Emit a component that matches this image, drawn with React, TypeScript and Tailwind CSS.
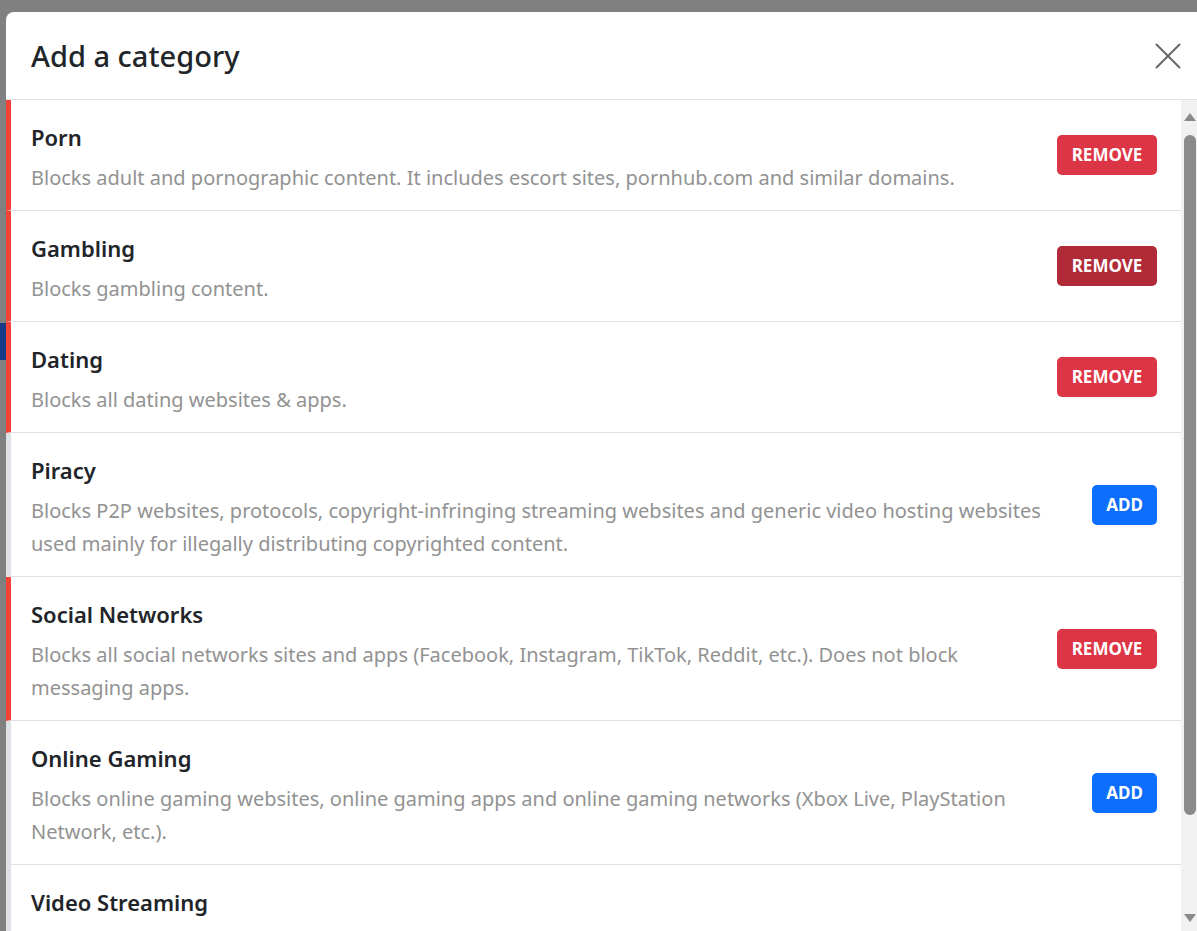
import { X } from 'lucide-react';

const categories = [
  { name: 'Porn', desc: 'Blocks adult and pornographic content. It includes escort sites, pornhub.com and similar domains.', active: true },
  { name: 'Gambling', desc: 'Blocks gambling content.', active: true, hover: true },
  { name: 'Dating', desc: 'Blocks all dating websites & apps.', active: true },
  { name: 'Piracy', desc: 'Blocks P2P websites, protocols, copyright-infringing streaming websites and generic video hosting websites used mainly for illegally distributing copyrighted content.', active: false },
  { name: 'Social Networks', desc: 'Blocks all social networks sites and apps (Facebook, Instagram, TikTok, Reddit, etc.). Does not block messaging apps.', active: true },
  { name: 'Online Gaming', desc: 'Blocks online gaming websites, online gaming apps and online gaming networks (Xbox Live, PlayStation Network, etc.).', active: false },
  { name: 'Video Streaming', desc: 'Blocks video streaming websites and apps (YouTube, Netflix, Twitch, Vimeo, Dailymotion, Disney+, Hulu, Prime Video, HBO Max, etc.). It also blocks embedded video players on other websites, and video content inside social apps.', active: false },
];

export default function App() {
  return (
    <div className="h-[931px] w-[1197px] overflow-hidden bg-[#808080] flex font-['Noto_Sans',sans-serif]">
      {/* page behind the overlay */}
      <div className="w-[6px] flex flex-col">
        <div className="h-[323px]"></div>
        <div className="h-[37px] bg-[#163a86]"></div>
      </div>

      <div className="flex-1 mt-[12px] bg-white rounded-tl-[8px] flex flex-col">
        <div className="h-[88px] shrink-0 border-b border-[#dee2e6] flex items-center justify-between pl-[25px] pr-[6px]">
          <h1 className="text-[29px] font-medium text-[#212529]">Add a category</h1>
          <button className="w-[46px] h-[46px] flex items-center justify-center text-[#6b6b6b]">
            <X size={46} strokeWidth={1.1} />
          </button>
        </div>

        <div className="flex flex-1 min-h-0">
          <div className="flex-1 overflow-hidden">
            {categories.map((c) => (
              <div
                key={c.name}
                className={`flex items-center border-l-[5px] border-b border-b-[#dee2e6] pl-[20px] pr-[24px] ${c.active ? 'border-l-[#f44336]' : 'border-l-[#dee2e6]'}`}
              >
                <div className="flex-1 pr-[30px] pt-[21px] pb-[16px]">
                  <div className="text-[22px] leading-[32px] font-semibold text-[#212529]">{c.name}</div>
                  <div className="mt-[8px] text-[20px] leading-[33px] text-[#929292]">{c.desc}</div>
                </div>
                {c.active ? (
                  <button className={`h-[40px] w-[100px] rounded-[5px] text-white font-bold text-[17px] ${c.hover ? 'bg-[#b02a37]' : 'bg-[#dc3545]'}`}>REMOVE</button>
                ) : (
                  <button className="h-[40px] w-[65px] rounded-[5px] bg-[#0d6efd] text-white font-bold text-[17px]">ADD</button>
                )}
              </div>
            ))}
          </div>

          {/* scrollbar */}
          <div className="w-[16px] bg-[#f1f1f1] flex flex-col items-center pt-[13px] pb-[9px] pl-[2px]">
            <div className="w-0 h-0 border-l-[6px] border-r-[6px] border-b-[8px] border-l-transparent border-r-transparent border-b-[#8a8a8a]"></div>
            <div className="mt-[14px] w-[12px] h-[680px] rounded-[6px] bg-[#8a8a8a]"></div>
            <div className="flex-1"></div>
            <div className="w-0 h-0 border-l-[6px] border-r-[6px] border-t-[8px] border-l-transparent border-r-transparent border-t-[#8a8a8a]"></div>
          </div>
        </div>
      </div>
    </div>
  );
}
